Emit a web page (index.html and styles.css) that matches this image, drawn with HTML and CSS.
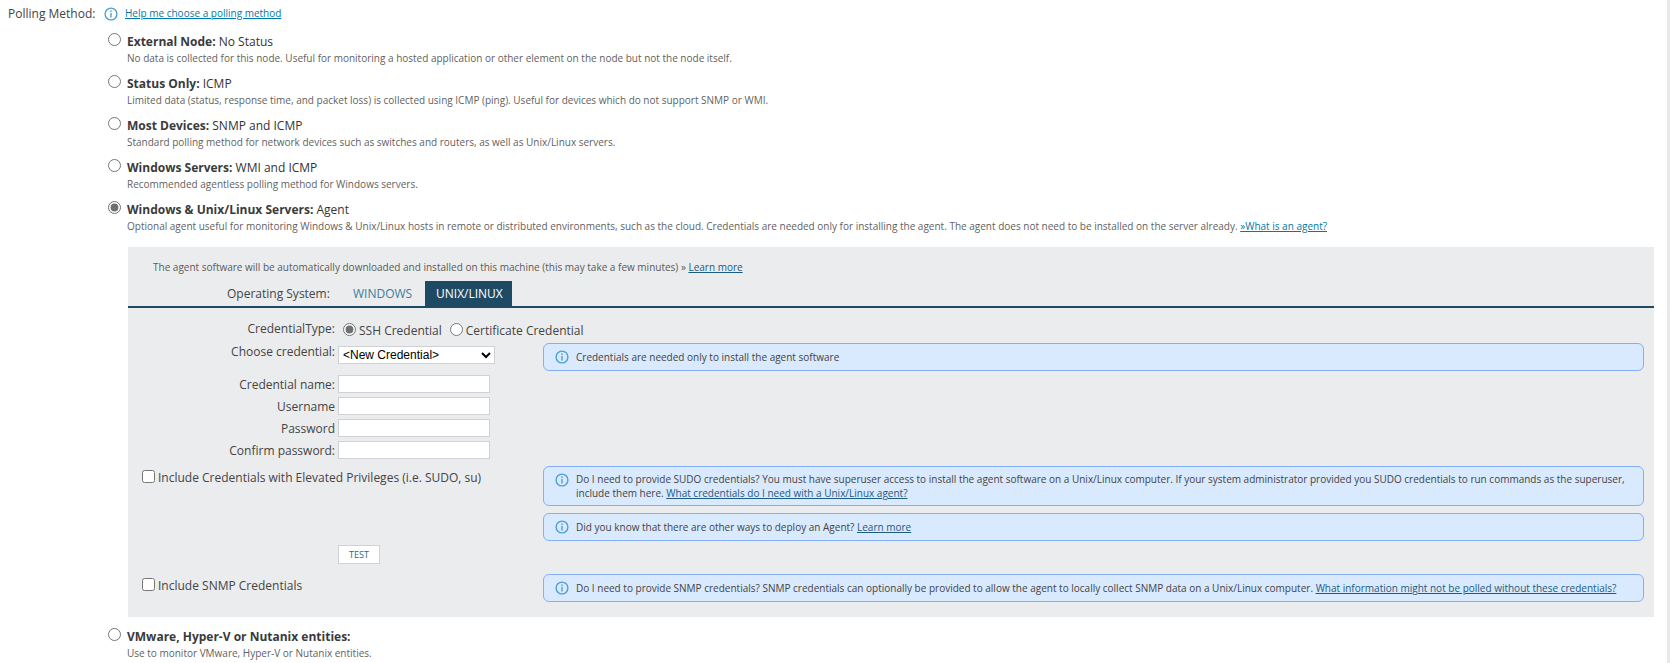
FILE: index.html
```html
<!DOCTYPE html>
<html lang="en">
<head>
<meta charset="utf-8">
<title>Polling Method</title>
<link rel="stylesheet" href="styles.css">
</head>
<body>
<svg class="sprite" width="0" height="0" aria-hidden="true">
  <symbol id="info" viewBox="0 0 14 14">
    <circle cx="7" cy="7" r="5.9" fill="none" stroke="currentColor" stroke-width="1.4"/>
    <rect x="6.3" y="3.4" width="1.4" height="1.5" fill="currentColor"/>
    <rect x="6.3" y="5.9" width="1.4" height="4.6" fill="currentColor"/>
  </symbol>
</svg>
<main class="page">
  <div class="heading-row">
    <span class="heading-label">Polling Method:</span>
    <svg class="icon icon-top"><use href="#info"/></svg>
    <a class="link help-link" href="#">Help me choose a polling method</a>
  </div>

  <div class="method">
    <input class="radio" type="radio" name="method">
    <div class="method-text">
      <div class="method-title"><b>External Node:</b> No Status</div>
      <div class="method-desc">No data is collected for this node. Useful for monitoring a hosted application or other element on the node but not the node itself.</div>
    </div>
  </div>
  <div class="method">
    <input class="radio" type="radio" name="method">
    <div class="method-text">
      <div class="method-title"><b>Status Only:</b> ICMP</div>
      <div class="method-desc">Limited data (status, response time, and packet loss) is collected using ICMP (ping). Useful for devices which do not support SNMP or WMI.</div>
    </div>
  </div>
  <div class="method">
    <input class="radio" type="radio" name="method">
    <div class="method-text">
      <div class="method-title"><b>Most Devices:</b> SNMP and ICMP</div>
      <div class="method-desc">Standard polling method for network devices such as switches and routers, as well as Unix/Linux servers.</div>
    </div>
  </div>
  <div class="method">
    <input class="radio" type="radio" name="method">
    <div class="method-text">
      <div class="method-title"><b>Windows Servers:</b> WMI and ICMP</div>
      <div class="method-desc">Recommended agentless polling method for Windows servers.</div>
    </div>
  </div>
  <div class="method">
    <input class="radio" type="radio" name="method" checked>
    <div class="method-text">
      <div class="method-title"><b>Windows &amp; Unix/Linux Servers:</b> Agent</div>
      <div class="method-desc">Optional agent useful for monitoring Windows &amp; Unix/Linux hosts in remote or distributed environments, such as the cloud. Credentials are needed only for installing the agent. The agent does not need to be installed on the server already. <a class="link" href="#">»What is an agent?</a></div>
    </div>
  </div>

  <section class="panel">
    <p class="panel-note">The agent software will be automatically downloaded and installed on this machine (this may take a few minutes) » <a class="link-dark" href="#">Learn more</a></p>
    <div class="tabs">
      <span class="tabs-label">Operating System:</span>
      <span class="tab">WINDOWS</span>
      <span class="tab tab-active">UNIX/LINUX</span>
    </div>
    <div class="panel-body">
      <div class="form-col">
        <div class="form-row row-type">
          <span class="field-label">CredentialType:</span>
          <div class="type-options">
            <input class="radio radio-type" type="radio" name="ctype" checked><span class="type-text">SSH Credential</span>
            <input class="radio radio-type radio-cert" type="radio" name="ctype"><span class="type-text">Certificate Credential</span>
          </div>
        </div>
        <div class="form-row row-choose">
          <span class="field-label">Choose credential:</span>
          <select class="select"><option>&lt;New Credential&gt;</option></select>
        </div>
        <div class="form-row row-input">
          <span class="field-label">Credential name:</span>
          <input class="input" type="text">
        </div>
        <div class="form-row row-input">
          <span class="field-label">Username</span>
          <input class="input" type="text">
        </div>
        <div class="form-row row-input">
          <span class="field-label">Password</span>
          <input class="input" type="password">
        </div>
        <div class="form-row row-input">
          <span class="field-label">Confirm password:</span>
          <input class="input" type="password">
        </div>
        <label class="check-row check-sudo"><input class="check" type="checkbox"><span class="check-text">Include Credentials with Elevated Privileges (i.e. SUDO, su)</span></label>
        <div class="test-row"><button class="test-btn" type="button">TEST</button></div>
        <label class="check-row check-snmp"><input class="check" type="checkbox"><span class="check-text">Include SNMP Credentials</span></label>
      </div>
      <div class="msg-col">
        <div class="msg msg-first">
          <svg class="icon"><use href="#info"/></svg>
          <div>Credentials are needed only to install the agent software</div>
        </div>
        <div class="msg msg-sudo">
          <svg class="icon"><use href="#info"/></svg>
          <div>Do I need to provide SUDO credentials? You must have superuser access to install the agent software on a Unix/Linux computer. If your system administrator provided you SUDO credentials to run commands as the superuser, include them here. <a class="link-dark" href="#">What credentials do I need with a Unix/Linux agent?</a></div>
        </div>
        <div class="msg msg-deploy">
          <svg class="icon"><use href="#info"/></svg>
          <div>Did you know that there are other ways to deploy an Agent? <a class="link-dark" href="#">Learn more</a></div>
        </div>
        <div class="msg msg-snmp">
          <svg class="icon"><use href="#info"/></svg>
          <div>Do I need to provide SNMP credentials? SNMP credentials can optionally be provided to allow the agent to locally collect SNMP data on a Unix/Linux computer. <a class="link-dark" href="#">What information might not be polled without these credentials?</a></div>
        </div>
      </div>
    </div>
  </section>

  <div class="method method-last">
    <input class="radio" type="radio" name="method">
    <div class="method-text">
      <div class="method-title"><b>VMware, Hyper-V or Nutanix entities:</b></div>
      <div class="method-desc">Use to monitor VMware, Hyper-V or Nutanix entities.</div>
    </div>
  </div>
</main>
</body>
</html>
```

FILE: styles.css
```css
* { box-sizing: border-box; }
html, body { margin: 0; height: 100%; overflow: hidden; }
body {
  background: #fff;
  color: #3d3d3d;
  font-family: "Open Sans", sans-serif;
  font-size: 12px;
}
.sprite { position: absolute; }
.page { height: 663px; overflow: hidden; border-right: 3px solid #e9e9e9; }

.heading-row {
  display: flex;
  align-items: center;
  height: 27px;
  padding-left: 8px;
}
.heading-label { width: 96px; font-size: 12px; color: #444; }
.icon { width: 14px; height: 14px; color: #4da0d6; flex: none; }
.icon-top { margin-right: 7px; }
.link { color: #0079a8; text-decoration: underline; }
.link-dark { color: #1d5a80; text-decoration: underline; }
.help-link { font-size: 10px; margin-top: -1px; }

.method {
  display: flex;
  padding-left: 108px;
  height: 42px;
  padding-top: 6px;
}
.radio {
  width: 13px;
  height: 13px;
  margin: 0 5px 0 0;
  flex: none;
  accent-color: #707070;
}
.method-text { margin-left: 1px; }
.method-title { font-size: 12px; line-height: 18px; color: #333; }
.method-title b { font-weight: 700; color: #3a3a3a; }
.method-desc { font-size: 10px; line-height: 14px; color: #5f5f5f; }

.panel {
  margin: 10px 13px 0 128px;
  height: 370px;
  background: #ebecee;
}
.panel-note {
  margin: 0;
  padding: 13px 0 0 25px;
  height: 34px;
  font-size: 10px;
  line-height: 14px;
  color: #5a5a5a;
}
.tabs {
  display: flex;
  align-items: stretch;
  height: 27px;
  padding-left: 99px;
  border-bottom: 2px solid #1f4a63;
}
.tabs-label { font-size: 12px; line-height: 25px; width: 109px; color: #444; }
.tab { font-size: 12px; line-height: 25px; color: #3b7d9c; padding-left: 17px; width: 89px; }
.tab-active { background: #1f4a63; color: #fff; padding-left: 11px; width: 87px; }

.panel-body { display: flex; }
.form-col { width: 415px; flex: none; }
.form-row { display: flex; align-items: center; }
.field-label {
  width: 207px;
  flex: none;
  text-align: right;
  font-size: 12px;
  color: #444;
  margin-right: 3px;
}
.row-type { height: 38px; padding-top: 2px; }
.type-options { display: flex; align-items: center; margin-left: 5px; font-size: 12px; white-space: nowrap; }
.radio-type { margin: 2px 3px 0 0; }
.radio-cert { margin-left: 8px; }
.type-text { color: #444; line-height: 18px; padding-top: 6px; }
.row-choose { height: 18px; margin-bottom: 9px; align-items: flex-start; }
.row-choose .field-label { line-height: 12px; }
.select {
  width: 157px;
  height: 18px;
  padding: 0;
  font-family: "Liberation Sans", sans-serif;
  font-size: 12px;
  color: #000;
  background: #fff;
  border: 1px solid #cfd1d4;
  border-radius: 0;
}
.row-input { height: 22px; }
.input {
  width: 152px;
  height: 18px;
  padding: 0 2px;
  background: #fff;
  border: 1px solid #cfd1d4;
  border-radius: 0;
}
.check-row { display: flex; align-items: center; height: 18px; padding-left: 14px; color: #444; font-size: 12px; }
.check { width: 13px; height: 13px; margin: 0 3px 0 0; }
.check-text { padding-top: 2px; }
.check-sudo { margin-top: 6px; }
.test-row { padding-left: 210px; margin-top: 60px; height: 20px; }
.test-btn {
  display: block;
  width: 42px;
  height: 19px;
  padding: 0;
  background: #fff;
  border: 1px solid #cfd1d4;
  color: #1d6a8a;
  font-family: "Open Sans", sans-serif;
  font-size: 9px;
}
.check-snmp { margin-top: 10px; }

.msg-col { width: 1101px; flex: none; }
.msg {
  display: flex;
  align-items: center;
  background: #d9e9fe;
  border: 1px solid #84aef5;
  border-radius: 6px;
  padding: 0 12px 0 11px;
  font-size: 10px;
  line-height: 14px;
  color: #444;
}
.msg .icon { margin-right: 7px; align-self: flex-start; margin-top: 6px; }
.msg-first, .msg-deploy, .msg-snmp { height: 28px; }
.msg-first { margin-top: 35px; }
.msg-sudo { height: 40px; margin-top: 95px; }
.msg-deploy { margin-top: 7px; }
.msg-snmp { margin-top: 33px; }

.method-last { padding-top: 11px; height: 46px; }
```
